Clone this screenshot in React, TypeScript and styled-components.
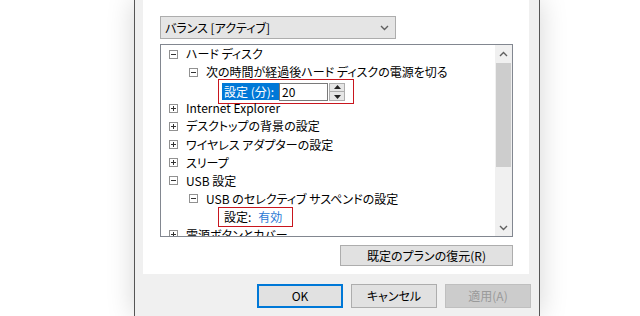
import React from "react"
import styled, { createGlobalStyle } from "styled-components"

const GlobalStyle = createGlobalStyle`
  html,
  body {
    margin: 0;
    padding: 0;
    background: #fff;
  }
  body {
    font-family: "Noto Sans CJK JP", "Noto Sans", sans-serif;
    font-size: 12px;
    color: #000;
    font-feature-settings: "palt";
  }
`

const Page = styled.div`
  width: 640px;
  height: 316px;
  overflow: hidden;
  background: #fff;
  display: flex;
`

const Dialog = styled.div`
  margin-left: 134px;
  width: 404px;
  height: 316px;
  flex-shrink: 0;
  border-left: 1px solid #555;
  border-right: 1px solid #555;
  background: #f0f0f0;
  box-shadow: 0 0 26px rgba(0, 0, 0, 0.17);
  display: flex;
  flex-direction: column;
`

const Panel = styled.div`
  margin-left: 8px;
  width: 386px;
  height: 274px;
  box-sizing: border-box;
  background: #fff;
  padding: 16px 0 0 17px;
`

const Column = styled.div`
  width: 353px;
  display: flex;
  flex-direction: column;
  align-items: flex-start;
`

const Combo = styled.div`
  width: 236px;
  height: 23px;
  box-sizing: border-box;
  border: 1px solid #adadad;
  background: #e5e5e5;
  display: flex;
  align-items: center;
  justify-content: space-between;
  padding: 0 6px 0 4px;
  line-height: 1;
`

const Tree = styled.div`
  margin-top: 5px;
  width: 353px;
  height: 193px;
  box-sizing: border-box;
  border: 1px solid #828790;
  display: flex;
  overflow: hidden;
`

const TreeBody = styled.div`
  flex: 1;
  overflow: hidden;
`

const Row = styled.div<{ indent: number }>`
  height: 18.1px;
  display: flex;
  align-items: center;
  padding-left: ${(p) => p.indent}px;
  white-space: nowrap;
  line-height: 1;
`

const Expander = styled.span<{ open: boolean }>`
  position: relative;
  width: 9px;
  height: 9px;
  box-sizing: border-box;
  border: 1px solid #919191;
  margin-right: 8px;
  flex-shrink: 0;
  &::before {
    content: "";
    position: absolute;
    left: 1px;
    top: 3px;
    width: 5px;
    height: 1px;
    background: #333;
  }
  &::after {
    content: "";
    display: ${(p) => (p.open ? "none" : "block")};
    position: absolute;
    left: 3px;
    top: 1px;
    width: 1px;
    height: 5px;
    background: #333;
  }
`

const Mark = styled.div<{ tall?: boolean }>`
  margin-top: ${(p) => (p.tall ? 3 : 0)}px;
  height: ${(p) => (p.tall ? 25 : 20)}px;
  box-sizing: border-box;
  border: 1px solid #c8161e;
  display: flex;
  align-items: center;
  padding: ${(p) => (p.tall ? "0 8px 0 3px" : "0 10px 0 5px")};
`

const Label = styled.span`
  width: 57px;
  height: 17px;
  box-sizing: border-box;
  display: flex;
  align-items: center;
  padding-left: 2px;
  background: #0078d7;
  color: #fff;
`

const NumberBox = styled.span`
  width: 49px;
  height: 18px;
  box-sizing: border-box;
  border: 1px solid #7a7a7a;
  display: flex;
  align-items: center;
  padding-left: 2px;
`

const Spinner = styled.span`
  margin-left: 1px;
  width: 16px;
  height: 18px;
  box-sizing: border-box;
  border: 1px solid #adadad;
  background: #e6e6e6;
  display: flex;
  flex-direction: column;
  align-items: center;
  justify-content: space-around;
`

const SpinDivider = styled.span`
  width: 14px;
  height: 1px;
  background: #adadad;
`

const Value = styled.span`
  color: #2a78d4;
  margin-left: 7px;
`

const Scrollbar = styled.div`
  width: 17px;
  background: #f0f0f0;
  display: flex;
  flex-direction: column;
`

const ScrollArrow = styled.div`
  height: 17px;
  display: flex;
  align-items: center;
  justify-content: center;
`

const Thumb = styled.div`
  margin: 1px 1px 0 1px;
  height: 104px;
  background: #cdcdcd;
`

const Track = styled.div`
  flex: 1;
`

const RestoreButton = styled.div`
  margin-top: 8px;
  align-self: flex-end;
  width: 173px;
  height: 21px;
  box-sizing: border-box;
  border: 1px solid #adadad;
  background: #e1e1e1;
  display: flex;
  align-items: center;
  justify-content: center;
  line-height: 1;
`

const Footer = styled.div`
  margin-top: 10px;
  padding-left: 122px;
  display: flex;
  gap: 8px;
`

const Button = styled.div<{ primary?: boolean; disabled?: boolean }>`
  width: 86px;
  height: 24px;
  box-sizing: border-box;
  border: ${(p) =>
    p.primary ? "2px solid #0078d7" : p.disabled ? "1px solid #bfbfbf" : "1px solid #adadad"};
  background: ${(p) => (p.disabled ? "#cccccc" : "#e1e1e1")};
  color: ${(p) => (p.disabled ? "#9a9a9a" : "#000")};
  display: flex;
  align-items: center;
  justify-content: center;
  line-height: 1;
`

const Chevron = ({ up }: { up?: boolean }) => (
  <svg width="9" height="6" viewBox="0 0 9 6">
    <path
      d={up ? "M1 5 L4.5 1.5 L8 5" : "M1 1 L4.5 4.5 L8 1"}
      fill="none"
      stroke="#606060"
      strokeWidth="1.4"
    />
  </svg>
)

const Triangle = ({ up }: { up?: boolean }) => (
  <svg width="7" height="4" viewBox="0 0 7 4">
    <path d={up ? "M0 4 L3.5 0 L7 4 Z" : "M0 0 L3.5 4 L7 0 Z"} fill="#222" />
  </svg>
)

type Item = { level: number; open?: boolean; text?: string; kind?: "minutes" | "value" }

const items: Item[] = [
  { level: 0, open: true, text: "ハード ディスク" },
  { level: 1, open: true, text: "次の時間が経過後ハード ディスクの電源を切る" },
  { level: 2, kind: "minutes" },
  { level: 0, open: false, text: "Internet Explorer" },
  { level: 0, open: false, text: "デスクトップの背景の設定" },
  { level: 0, open: false, text: "ワイヤレス アダプターの設定" },
  { level: 0, open: false, text: "スリープ" },
  { level: 0, open: true, text: "USB 設定" },
  { level: 1, open: true, text: "USB のセレクティブ サスペンドの設定" },
  { level: 2, kind: "value" },
  { level: 0, open: false, text: "電源ボタンとカバー" },
]

// settings rows sit further in than their parent's text
const indentFor = (item: Item) => (item.kind ? 57 : 8 + item.level * 20)

const App = () => {
  return (
    <>
      <GlobalStyle />
      <Page>
        <Dialog>
          <Panel>
            <Column>
              <Combo>
                <span>バランス [アクティブ]</span>
                <Chevron />
              </Combo>
              <Tree>
                <TreeBody>
                  {items.map((item, i) => {
                    if (item.kind === "minutes") {
                      return (
                        <Row key={i} indent={indentFor(item)}>
                          <Mark tall>
                            <Label>設定 (分):</Label>
                            <NumberBox>20</NumberBox>
                            <Spinner>
                              <Triangle up />
                              <SpinDivider />
                              <Triangle />
                            </Spinner>
                          </Mark>
                        </Row>
                      )
                    }
                    if (item.kind === "value") {
                      return (
                        <Row key={i} indent={indentFor(item)}>
                          <Mark>
                            <span>設定:</span>
                            <Value>有効</Value>
                          </Mark>
                        </Row>
                      )
                    }
                    return (
                      <Row key={i} indent={indentFor(item)}>
                        <Expander open={!!item.open} />
                        <span>{item.text}</span>
                      </Row>
                    )
                  })}
                </TreeBody>
                <Scrollbar>
                  <ScrollArrow>
                    <Chevron up />
                  </ScrollArrow>
                  <Thumb />
                  <Track />
                  <ScrollArrow>
                    <Chevron />
                  </ScrollArrow>
                </Scrollbar>
              </Tree>
              <RestoreButton>既定のプランの復元(R)</RestoreButton>
            </Column>
          </Panel>
          <Footer>
            <Button primary>OK</Button>
            <Button>キャンセル</Button>
            <Button disabled>適用(A)</Button>
          </Footer>
        </Dialog>
      </Page>
    </>
  )
}

export default App
